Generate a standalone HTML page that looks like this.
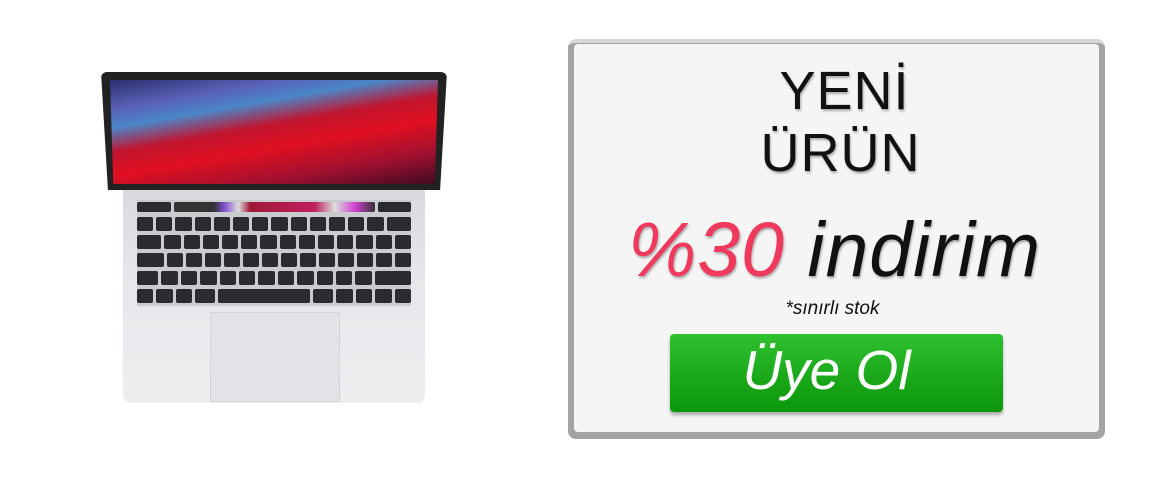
<!DOCTYPE html>
<html><head><meta charset="utf-8"><style>
*{margin:0;padding:0;box-sizing:border-box}
body{width:1170px;height:480px;background:#fff;position:relative;overflow:hidden;font-family:"Liberation Sans",sans-serif}
.abs{position:absolute}
.screen{left:101px;top:72px;width:346px;height:118px;background:#222;border-radius:6px 6px 2px 2px;clip-path:polygon(0 0,100% 0,98% 100%,2% 100%)}
.disp{left:110px;top:80px;width:328px;height:104px;
background:linear-gradient(170deg,#2a2f6e 0%,#5a5fb5 18%,#4a86c8 30%,#c01530 45%,#e01020 60%,#a01030 80%,#400a20 100%);clip-path:polygon(0 0,100% 0,99% 100%,1% 100%)}
.base{left:123px;top:190px;width:302px;height:213px;background:linear-gradient(#d8dadd,#e6e7ea 40%,#eceef0);border-radius:2px 2px 8px 8px}
.kb{left:137px;top:200px;width:274px;height:106px;background:#c9cbcf}
.row{position:absolute;left:0;height:14px;display:flex;gap:3px}
.row div{background:#2a2b2e;height:14px;border-radius:2px;flex:1}
.pad{left:210px;top:312px;width:130px;height:90px;background:#e2e3e6;border:1px solid #d4d5d8}
.card{left:568px;top:39px;width:537px;height:400px;background:#a3a3a3;border-radius:8px;border-top:4px solid #d8d8d8}
.inner{left:574px;top:44px;width:525px;height:388px;background:#f5f5f5;border-radius:4px}
.t{position:absolute;width:100%;text-align:center;color:#111;text-shadow:1px 2px 2px rgba(0,0,0,.3)}
.btn{left:670px;top:334px;width:333px;height:78px;border-radius:4px;background:linear-gradient(#2fc02f,#0a960a);box-shadow:0 3px 3px rgba(0,0,0,.3)}
</style></head><body>
<div class="abs screen"></div>
<div class="abs disp"></div>
<div class="abs base"></div>
<div class="abs kb">
<div class="row" style="top:2px;width:274px;height:10px"><div style="height:10px"></div><div style="height:10px;flex:6;background:linear-gradient(90deg,#333 0,#333 20%,#8050d0 25%,#ddd 32%,#a01838 38%,#c02060 70%,#ddd 80%,#d040d0 90%,#333)"></div><div style="height:10px"></div></div>
<div class="row" style="top:17px;width:274px"><div></div><div></div><div></div><div></div><div></div><div></div><div></div><div></div><div></div><div></div><div></div><div></div><div></div><div style="flex:1.5"></div></div>
<div class="row" style="top:35px;width:274px"><div style="flex:1.5"></div><div></div><div></div><div></div><div></div><div></div><div></div><div></div><div></div><div></div><div></div><div></div><div></div><div></div></div>
<div class="row" style="top:53px;width:274px"><div style="flex:1.7"></div><div></div><div></div><div></div><div></div><div></div><div></div><div></div><div></div><div></div><div></div><div></div><div></div><div></div></div>
<div class="row" style="top:71px;width:274px"><div style="flex:1.3"></div><div></div><div></div><div></div><div></div><div></div><div></div><div></div><div></div><div></div><div></div><div></div><div style="flex:2.2"></div></div>
<div class="row" style="top:89px;width:274px"><div></div><div></div><div></div><div style="flex:1.2"></div><div style="flex:5.6"></div><div style="flex:1.2"></div><div></div><div></div><div></div><div></div></div>
</div>
<div class="abs pad"></div>

<div class="abs card"></div>
<div class="abs inner"></div>
<div class="abs" style="left:568px;top:0;width:537px;height:480px">
<div class="t" style="top:60px;font-size:54px;letter-spacing:1px;left:8px">YENİ</div>
<div class="t" style="top:122px;font-size:54px;letter-spacing:1px;left:4px">ÜRÜN</div>
<div class="t" style="top:206px;font-size:77px;font-style:italic;left:-2px;letter-spacing:1px"><span style="color:#ef3a5d">%30</span> indirim</div>
<div class="t" style="top:298px;font-size:19px;font-style:italic;text-shadow:none;left:-4px">*sınırlı stok</div>
</div>
<div class="abs btn"></div>
<div class="abs" style="top:338px;width:333px;text-align:center;color:#fff;font-size:55px;font-style:italic;left:660px">Üye Ol</div>
</body></html>
